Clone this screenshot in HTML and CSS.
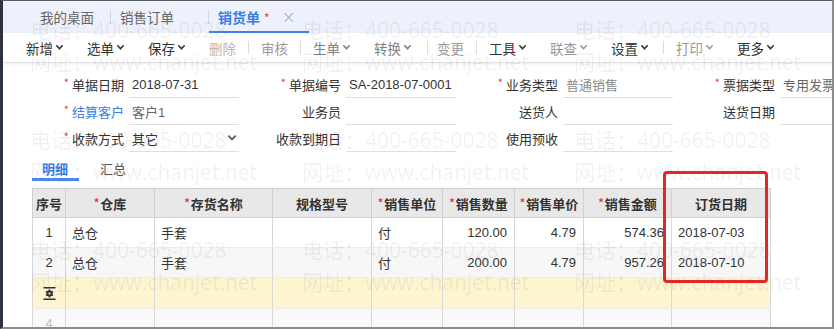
FILE: index.html
```html
<!DOCTYPE html>
<html lang="zh-CN">
<head>
<meta charset="utf-8">
<title>销货单</title>
<link rel="stylesheet" href="styles.css">
</head>
<body>
<div class="frame">
  <div class="tabbar">
    <div class="tab tab-home">我的桌面</div>
    <span class="tsep"></span>
    <div class="tab tab-order">销售订单</div>
    <span class="tsep"></span>
    <div class="tab active"><span class="tab-title">销货单</span><span class="tab-req">*</span><span class="tab-close">×</span></div>
  </div>

  <div class="toolbar">
    <span class="tb">新增<svg class="chev" viewBox="0 0 7 5" width="7" height="5"><polyline points="0.8,0.8 3.5,3.8 6.2,0.8"/></svg></span>
    <span class="tb">选单<svg class="chev" viewBox="0 0 7 5" width="7" height="5"><polyline points="0.8,0.8 3.5,3.8 6.2,0.8"/></svg></span>
    <span class="tb">保存<svg class="chev" viewBox="0 0 7 5" width="7" height="5"><polyline points="0.8,0.8 3.5,3.8 6.2,0.8"/></svg></span>
    <span class="tb off light">删除</span>
    <span class="sep"></span>
    <span class="tb off">审核</span>
    <span class="sep"></span>
    <span class="tb mid">生单<svg class="chev" viewBox="0 0 7 5" width="7" height="5"><polyline points="0.8,0.8 3.5,3.8 6.2,0.8"/></svg></span>
    <span class="tb mid">转换<svg class="chev" viewBox="0 0 7 5" width="7" height="5"><polyline points="0.8,0.8 3.5,3.8 6.2,0.8"/></svg></span>
    <span class="sep sep-a"></span>
    <span class="tb off">变更</span>
    <span class="sep"></span>
    <span class="tb">工具<svg class="chev" viewBox="0 0 7 5" width="7" height="5"><polyline points="0.8,0.8 3.5,3.8 6.2,0.8"/></svg></span>
    <span class="tb off">联查<svg class="chev" viewBox="0 0 7 5" width="7" height="5"><polyline points="0.8,0.8 3.5,3.8 6.2,0.8"/></svg></span>
    <span class="tb">设置<svg class="chev" viewBox="0 0 7 5" width="7" height="5"><polyline points="0.8,0.8 3.5,3.8 6.2,0.8"/></svg></span>
    <span class="sep sep-b"></span>
    <span class="tb off">打印<svg class="chev" viewBox="0 0 7 5" width="7" height="5"><polyline points="0.8,0.8 3.5,3.8 6.2,0.8"/></svg></span>
    <span class="tb">更多<svg class="chev" viewBox="0 0 7 5" width="7" height="5"><polyline points="0.8,0.8 3.5,3.8 6.2,0.8"/></svg></span>
  </div>

  <div class="form">
    <div class="field"><label class="lbl"><i class="req">*</i>单据日期</label><div class="inp">2018-07-31</div></div>
    <div class="field"><label class="lbl"><i class="req">*</i>单据编号</label><div class="inp">SA-2018-07-0001</div></div>
    <div class="field"><label class="lbl"><i class="req">*</i>业务类型</label><div class="inp muted">普通销售</div></div>
    <div class="field"><label class="lbl"><i class="req">*</i>票据类型</label><div class="inp soft">专用发票</div></div>

    <div class="field"><label class="lbl link"><i class="req">*</i>结算客户</label><div class="inp soft">客户1</div></div>
    <div class="field"><label class="lbl">业务员</label><div class="inp"></div></div>
    <div class="field"><label class="lbl">送货人</label><div class="inp"></div></div>
    <div class="field"><label class="lbl">送货日期</label><div class="inp"></div></div>

    <div class="field"><label class="lbl"><i class="req">*</i>收款方式</label><div class="inp select"><span>其它</span><svg class="chev" viewBox="0 0 7 5" width="8" height="6"><polyline points="0.8,0.8 3.5,3.8 6.2,0.8"/></svg></div></div>
    <div class="field"><label class="lbl">收款到期日</label><div class="inp"></div></div>
    <div class="field"><label class="lbl">使用预收</label><div class="inp"></div></div>
    <div class="field"></div>
  </div>

  <div class="subtabs">
    <span class="st active">明细</span>
    <span class="st">汇总</span>
  </div>

  <table class="grid">
    <colgroup>
      <col class="c-no"><col class="c-wh"><col class="c-name"><col class="c-spec"><col class="c-unit"><col class="c-qty"><col class="c-price"><col class="c-amt"><col class="c-date">
    </colgroup>
    <thead>
      <tr>
        <th>序号</th>
        <th><i class="req">*</i>仓库</th>
        <th><i class="req">*</i>存货名称</th>
        <th>规格型号</th>
        <th><i class="req">*</i>销售单位</th>
        <th><i class="req">*</i>销售数量</th>
        <th><i class="req">*</i>销售单价</th>
        <th><i class="req">*</i>销售金额</th>
        <th>订货日期</th>
      </tr>
    </thead>
    <tbody>
      <tr>
        <td class="no">1</td><td>总仓</td><td>手套</td><td></td><td>付</td><td class="num">120.00</td><td class="num">4.79</td><td class="num">574.36</td><td>2018-07-03</td>
      </tr>
      <tr class="alt">
        <td class="no">2</td><td>总仓</td><td>手套</td><td></td><td>付</td><td class="num">200.00</td><td class="num">4.79</td><td class="num">957.26</td><td>2018-07-10</td>
      </tr>
      <tr class="cur">
        <td class="no"><svg class="gear" viewBox="0 0 13 13" width="13" height="13"><rect x="0.5" y="0" width="12" height="1.5"/><rect x="0.5" y="11.5" width="12" height="1.5"/><g transform="translate(6.5 6.5)"><rect x="-0.9" y="-4" width="1.8" height="8"/><rect x="-0.9" y="-4" width="1.8" height="8" transform="rotate(60)"/><rect x="-0.9" y="-4" width="1.8" height="8" transform="rotate(120)"/><circle r="3"/><circle r="1.1" class="hole"/></g></svg></td><td></td><td></td><td></td><td></td><td></td><td></td><td></td><td></td>
      </tr>
      <tr class="empty">
        <td class="no">4</td><td></td><td></td><td></td><td></td><td></td><td></td><td></td><td></td>
      </tr>
    </tbody>
  </table>

  <div class="wm" aria-hidden="true">
    <div><span>电话：400-665-0028</span><span>网址：www.chanjet.net</span></div>
    <div><span>电话：400-665-0028</span><span>网址：www.chanjet.net</span></div>
    <div><span>电话：400-665-0028</span><span>网址：www.chanjet.net</span></div>
    <div><span>电话：400-665-0028</span><span>网址：www.chanjet.net</span></div>
    <div><span>电话：400-665-0028</span><span>网址：www.chanjet.net</span></div>
    <div><span>电话：400-665-0028</span><span>网址：www.chanjet.net</span></div>
    <div><span>电话：400-665-0028</span><span>网址：www.chanjet.net</span></div>
    <div><span>电话：400-665-0028</span><span>网址：www.chanjet.net</span></div>
    <div><span>电话：400-665-0028</span><span>网址：www.chanjet.net</span></div>
  </div>

  <div class="mark"></div>
</div>
</body>
</html>
```

FILE: styles.css
```css
* { box-sizing: border-box; }
html, body { margin: 0; padding: 0; }
body {
  width: 834px;
  height: 329px;
  overflow: hidden;
  background: #fff;
  font-family: "Liberation Sans", "Noto Sans CJK SC", sans-serif;
  color: #333;
}
.frame {
  position: relative;
  width: 834px;
  height: 329px;
  border-left: 3px solid #2c323e;
  border-top: 1px solid #5a5e66;
  border-right: 2px solid #8c8c8c;
  border-bottom: 2px solid #8c8c8c;
  overflow: hidden;
  background: #fff;
}

/* tab bar */
.tabbar {
  display: flex;
  align-items: center;
  height: 32px;
  background: #edf1fb;
  padding-left: 37px;
  font-family: "Noto Sans CJK SC", sans-serif;
  font-size: 13.5px;
  color: #666;
}
.tab { display: flex; align-items: center; height: 100%; }
.tab-home { margin-right: 16px; }
.tab-order { margin-left: 9px; margin-right: 34px; }
.tsep { width: 1px; height: 14px; background: #d4d9e3; }
.tab.active {
  width: 100px;
  padding: 2px 0 0 9px;
  border-bottom: 2px solid #3f82ee;
}
.tab-title { color: #3a7de6; font-weight: bold; font-size: 14px; }
.tab-req { color: #e8334a; font-size: 12px; align-self: flex-start; margin: 6px 0 0 4px; }
.tab-close { color: #a8a8a8; font-size: 17px; margin-left: 12px; font-family: "DejaVu Sans", sans-serif; font-weight: 300; }

/* toolbar */
.toolbar {
  position: relative;
  display: flex;
  align-items: center;
  height: 30px;
  padding-left: 11px;
  border-bottom: 1px solid #e2e2e2;
  box-shadow: 0 1px 3px rgba(0, 0, 0, 0.08);
  font-family: "Noto Sans CJK SC", sans-serif;
  font-size: 13.5px;
  color: #333;
}
.tb { display: inline-flex; align-items: center; padding: 0 12px; white-space: nowrap; }
.tb .chev { margin-left: 3px; }
.tb.off { color: #9a9a9a; }
.tb.light { color: #b8b8b8; }
.tb.mid { color: #808080; }
.chev { fill: none; stroke: currentColor; stroke-width: 1.6; stroke-linecap: round; stroke-linejoin: round; }
.sep { width: 1px; height: 13px; background: #dcdcdc; }
.sep-a { margin: 0 -3px 0 4px; }
.sep-b { margin-left: 3px; }

/* form */
.form {
  display: grid;
  grid-template-columns: repeat(4, 217px);
  grid-auto-rows: 27px;
  padding: 8px 0 0 19px;
  font-size: 13px;
}
.field { display: grid; grid-template-columns: 102px 110px; column-gap: 5px; }
.lbl {
  display: flex;
  align-items: center;
  justify-content: flex-end;
  color: #333;
  white-space: nowrap;
  font-family: "Noto Sans CJK SC", sans-serif;
}
.lbl.link { color: #3c7ee4; }
.req {
  font-style: normal;
  color: #e8384f;
  font-size: 11px;
  margin-right: 3px;
  position: relative;
  top: -3px;
}
.inp {
  display: flex;
  align-items: center;
  height: 27px;
  padding-left: 3px;
  border-bottom: 1px solid #dfdfdf;
  white-space: nowrap;
  color: #333;
}
.inp.muted { color: #8a8a8a; }
.inp.soft { color: #666; }
.inp.select { justify-content: space-between; padding-right: 3px; color: #333; }
.inp.select .chev { color: #555; stroke-width: 1.5; }

/* sub tabs */
.subtabs {
  display: flex;
  height: 26px;
  margin: 3px 0 0 29px;
  font-family: "Noto Sans CJK SC", sans-serif;
  font-size: 13px;
}
.st { display: flex; align-items: center; padding: 3px 11px 0 10px; color: #555; border-bottom: 3px solid transparent; }
.st + .st { margin-left: 11px; }
.st.active { color: #3a7de6; font-weight: bold; border-bottom-color: #4a8af0; }

/* table */
.grid {
  margin: 7px 0 0 29px;
  width: 738px;
  border-collapse: collapse;
  table-layout: fixed;
  font-size: 13px;
}
.c-no { width: 33px; }
.c-wh { width: 89px; }
.c-name { width: 118px; }
.c-spec { width: 99px; }
.c-unit { width: 71px; }
.c-qty { width: 72px; }
.c-price { width: 69px; }
.c-amt { width: 88px; }
.c-date { width: 99px; }
.grid th {
  height: 29px;
  padding: 0;
  background: #e8e8e8;
  border: 1px solid #d0d0d0;
  font-family: "Noto Sans CJK SC", sans-serif;
  font-weight: bold;
  color: #333;
  white-space: nowrap;
}
.grid th .req { margin-right: 1px; top: -2px; }
.grid td {
  height: 30px;
  padding: 0 6px;
  border-left: 1px solid #d8d8d8;
  border-right: 1px solid #d8d8d8;
  border-bottom: 1px solid #ececec;
  color: #333;
  white-space: nowrap;
  overflow: hidden;
}
.grid td.no { text-align: center; padding: 0; }
.grid td.num { text-align: right; padding-right: 7px; }
.grid tr.alt td { background: #f7f7f7; }
.grid tr.cur td { background: #fdf5d0; height: 31px; }
.grid tr.empty td { background: #f9f9f9; }
.grid tr.empty td.no { color: #bdbdbd; }
.gear { display: block; margin: 0 auto; fill: #333; }
.gear .hole { fill: #fdf5d0; }

/* watermark */
.wm {
  position: absolute;
  left: 27px;
  top: 13px;
  display: grid;
  grid-template-columns: repeat(3, 272px);
  grid-auto-rows: 110px;
  pointer-events: none;
  font-family: "Open Sans", "Noto Sans CJK SC", sans-serif;
  font-size: 21px;
  line-height: 32px;
  color: rgba(0, 0, 0, 0.065);
  white-space: nowrap;
  z-index: 5;
}
.wm div { display: flex; flex-direction: column; }

/* annotation */
.mark {
  position: absolute;
  left: 660px;
  top: 170px;
  width: 105px;
  height: 112px;
  border: 3px solid #e3262a;
  border-radius: 4px;
  z-index: 6;
}
```
